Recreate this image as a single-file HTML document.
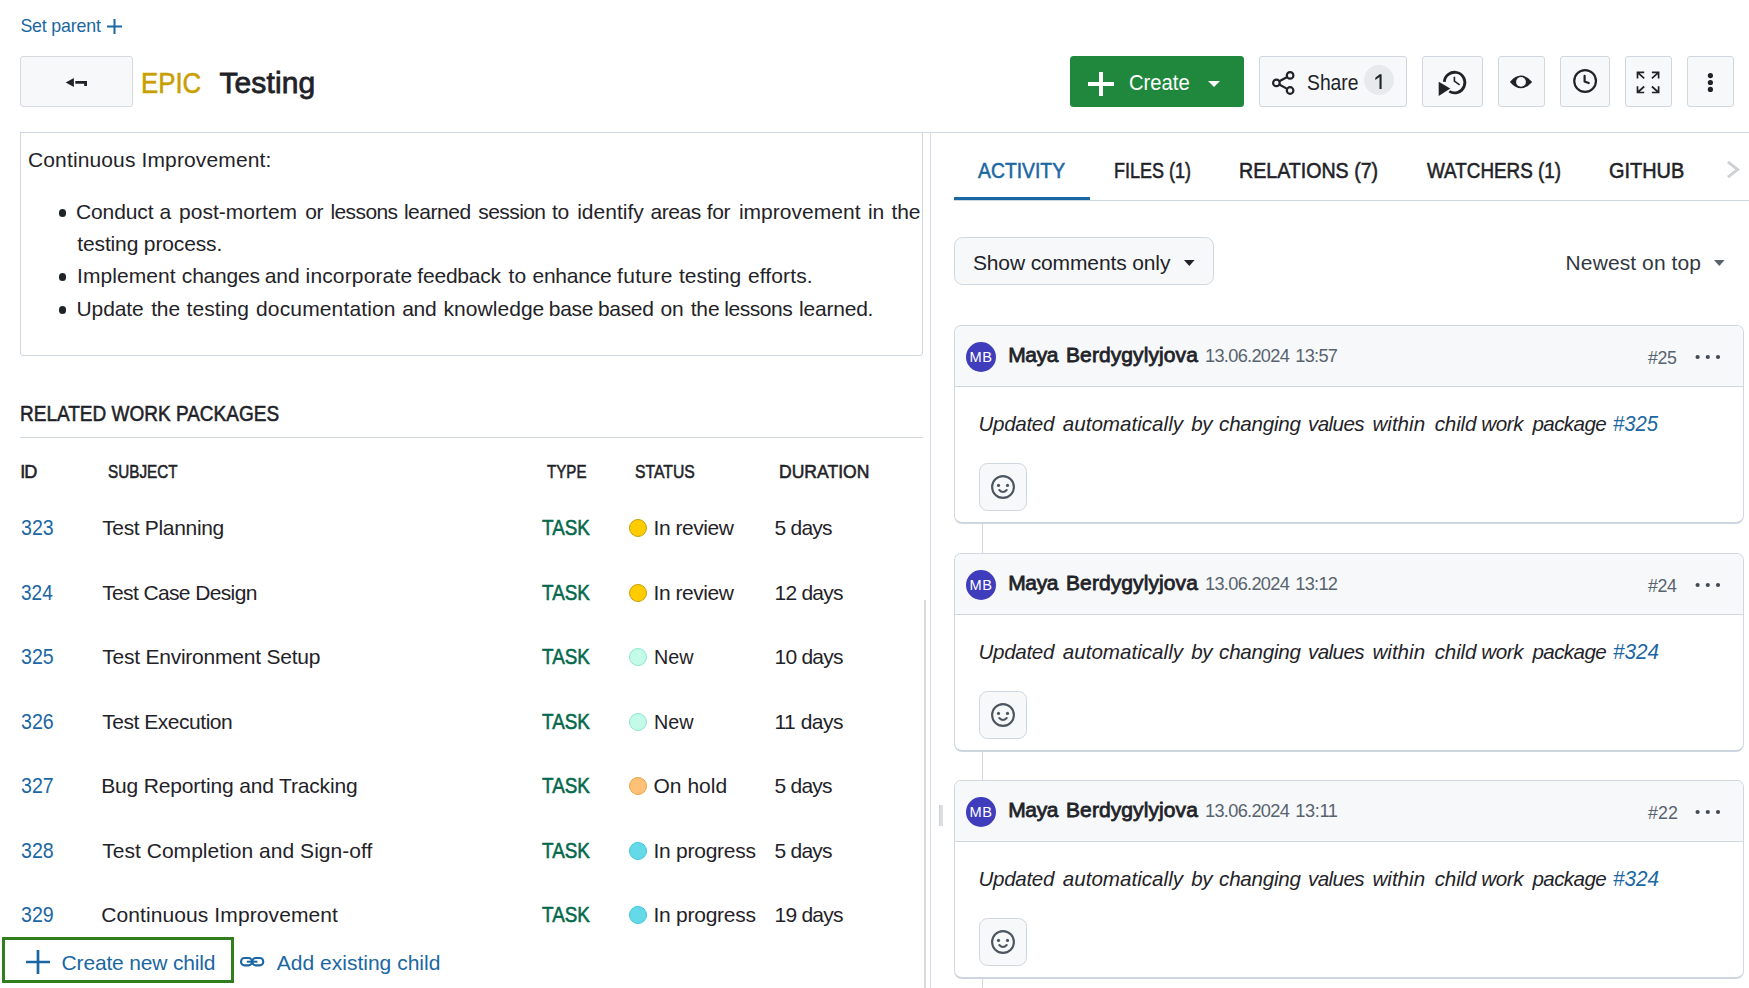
<!DOCTYPE html>
<html lang="en">
<head>
<meta charset="utf-8">
<title>EPIC Testing</title>
<style>
html,body{margin:0;padding:0;background:#fff}
body{width:1749px;height:988px;overflow:hidden;position:relative;font-family:"Liberation Sans",sans-serif;color:#1f2328}
.t{position:absolute;white-space:nowrap;line-height:1;display:block}
.a{position:absolute;box-sizing:border-box}
.btn{position:absolute;box-sizing:border-box;background:#f6f8fa;border:1px solid #d0d7de;border-radius:3px;top:56px;height:51px}
.ln{position:absolute;background:#d0d7de}
svg{position:absolute;overflow:visible}
.dot{position:absolute;box-sizing:border-box;width:18px;height:18px;border-radius:50%;left:629px;border:1px solid}
.card{position:absolute;box-sizing:border-box;left:954px;width:790px;height:199px;border:1px solid #d0d7de;border-bottom:2px solid #cdd5de;border-radius:7px 7px 8px 8px;background:#fff;overflow:hidden}
.card .hd{position:absolute;left:0;top:0;right:0;height:60px;background:#f6f8fa;border-bottom:1px solid #d0d7de}
.av{position:absolute;width:30px;height:30px;border-radius:50%;background:#3f3dbb;left:966px}
.emo{position:absolute;box-sizing:border-box;left:979px;width:48px;height:48px;border:1px solid #d0d7de;border-radius:8.5px;background:#f6f8fa}
.bul{position:absolute;width:7.4px;height:7.4px;border-radius:50%;background:#1f2328;left:58.7px}
</style>
</head>
<body>

<!-- ===== top header ===== -->
<svg style="left:106.5px;top:19px" width="15" height="15" viewBox="0 0 15 15"><path d="M7.5 0v15M0 7.5h15" stroke="#1a67a3" stroke-width="2" fill="none"/></svg>

<div class="btn" style="left:20px;width:113px;border-color:#d6d9dd"></div>
<svg style="left:65px;top:77px" width="23" height="11" viewBox="65 77 23 11"><path d="M65.7 82.4L73.9 77.9V86.9Z" fill="#1f2328"/><path d="M75.3 81H87V86H84.2V83.7H75.3Z" fill="#1f2328"/></svg>

<div class="a" style="left:1070px;top:56px;width:174px;height:51px;background:#1f883d;border-radius:3.5px"></div>
<svg style="left:1088px;top:72px" width="26" height="24" viewBox="0 0 26 24"><path d="M13 0v24M0 12h26" stroke="#fff" stroke-width="4" fill="none"/></svg>
<svg style="left:1207.6px;top:81px" width="12" height="6" viewBox="0 0 12 6"><path d="M0 0h12L6 6z" fill="#fff"/></svg>

<div class="btn" style="left:1259px;width:148px"></div>
<svg style="left:1270px;top:69px" width="28" height="28" viewBox="1270 69 28 28"><g fill="none" stroke="#1f2328" stroke-width="2.2"><circle cx="1276.4" cy="82.9" r="3.3"/><circle cx="1290.1" cy="75.4" r="3.3"/><circle cx="1290.1" cy="90.5" r="3.3"/><path d="M1279.3 81.3l7.9-4.3M1279.3 84.5l7.9 4.4"/></g></svg>
<div class="a" style="left:1363.9px;top:64.8px;width:29.9px;height:29.9px;border-radius:50%;background:#e7eaed"></div>
<svg style="left:1374px;top:73px" width="10" height="17" viewBox="1374 73 10 17"><path d="M1375.300 77.700L1379.700 74.300H1381.600V88.900H1379.500V76.900L1375.300 79.900Z" fill="#1f2328"/></svg>

<div class="btn" style="left:1422px;width:61px"></div>
<svg style="left:1436px;top:68px" width="34" height="30" viewBox="1436 68 34 30"><path d="M1444.3 81.9A10.3 10.3 0 1 1 1449.3 91.4" fill="none" stroke="#1f2328" stroke-width="2.8"/><path d="M1438.7 81.8V96L1450.3 88.5Z" fill="#1f2328"/><path d="M1454.4 76.8v4.3l5.2 3.8" fill="none" stroke="#1f2328" stroke-width="1.6"/></svg>

<div class="btn" style="left:1498px;width:47px"></div>
<svg style="left:1508px;top:74px" width="26" height="16" viewBox="1508 74 26 16"><path d="M1509.9 81.9Q1515.5 75.6 1521 75.6T1532.2 81.9Q1526.6 88.3 1521 88.3T1509.9 81.9Z" fill="#1f2328"/><circle cx="1521" cy="81.9" r="4.9" fill="#f6f8fa"/></svg>

<div class="btn" style="left:1560px;width:50px"></div>
<svg style="left:1572px;top:68px" width="27" height="27" viewBox="1572 68 27 27"><g fill="none" stroke="#1f2328" stroke-width="2.2" stroke-linecap="round" stroke-linejoin="round"><circle cx="1585.1" cy="81" r="10.85"/><path d="M1584.6 75.9v5.6l4.1 1.6"/></g></svg>

<div class="btn" style="left:1625px;width:47px"></div>
<svg style="left:1636px;top:71px" width="24" height="23" viewBox="1636 71 24 23"><g fill="none" stroke="#1f2328" stroke-width="1.7"><path d="M1644.2 72.3h-6.7v6.3M1637.5 72.3l6.7 6"/><path d="M1651.9 72.3h6.7v6.3M1658.6 72.3l-6.7 6"/><path d="M1644.2 92.5h-6.7v-6.3M1637.5 92.5l6.7-6"/><path d="M1651.9 92.5h6.7v-6.3M1658.6 92.5l-6.7-6"/></g></svg>

<div class="btn" style="left:1687px;width:47px"></div>
<svg style="left:1708px;top:72px" width="6" height="21" viewBox="1708 72 6 21"><g fill="#1f2328"><circle cx="1710.4" cy="75.6" r="2.6"/><circle cx="1710.4" cy="82.5" r="2.6"/><circle cx="1710.4" cy="89.4" r="2.6"/></g></svg>

<!-- ===== separator lines ===== -->
<div class="ln" style="left:20px;top:132px;width:1729px;height:1px"></div>
<div class="ln" style="left:930px;top:132px;width:1px;height:856px;background:#d5dce3"></div>
<div class="a" style="left:924px;top:600px;width:2px;height:388px;background:#dadada"></div>
<div class="a" style="left:939px;top:805px;width:4px;height:21px;background:#dddee0;border-left:1px solid #cfd1d4"></div>

<!-- ===== description box ===== -->
<div class="a" style="left:20px;top:132px;width:903px;height:224px;border:1px solid #d0d7de;border-radius:0 0 3px 3px"></div>
<div class="bul" style="top:209.2px"></div>
<div class="bul" style="top:273.2px"></div>
<div class="bul" style="top:306.2px"></div>

<!-- ===== related work packages ===== -->
<div class="ln" style="left:20px;top:437px;width:903px;height:1px"></div>
<div class="dot" style="top:519.00px;background:#ffcc00;border-color:#c7a008"></div>
<div class="dot" style="top:584.00px;background:#ffcc00;border-color:#c7a008"></div>
<div class="dot" style="top:648.00px;background:#c3fae8;border-color:#8ce9cd"></div>
<div class="dot" style="top:713.00px;background:#c3fae8;border-color:#8ce9cd"></div>
<div class="dot" style="top:777.00px;background:#ffc078;border-color:#e9a53c"></div>
<div class="dot" style="top:842.00px;background:#66d9e8;border-color:#3bc9db"></div>
<div class="dot" style="top:906.00px;background:#66d9e8;border-color:#3bc9db"></div>

<div class="a" style="left:2px;top:937px;width:232px;height:46px;border:3px solid #327e1e"></div>
<svg style="left:26px;top:950.2px" width="24" height="24" viewBox="0 0 24 24"><path d="M12 0v24M0 12h24" stroke="#1a67a3" stroke-width="2.7" fill="none"/></svg>
<svg style="left:239.8px;top:957.2px" width="24.3" height="9.4" viewBox="0 0 24.3 9.4"><g fill="none" stroke="#1a67a3" stroke-width="2.1"><rect x="1.05" y="1.05" width="10.9" height="7.3" rx="3.4"/><rect x="12.35" y="1.05" width="10.9" height="7.3" rx="3.4"/><path d="M6.900 4.700H17.400" stroke-width="2"/></g></svg>

<!-- ===== right pane ===== -->
<div class="ln" style="left:954px;top:200px;width:795px;height:1px"></div>
<div class="a" style="left:954px;top:197px;width:136px;height:3px;background:#1a67a3"></div>
<svg style="left:1726px;top:160px" width="14" height="19" viewBox="0 0 14 19"><path d="M1.900 1.900L11.600 9.600L1.900 17.100" fill="none" stroke="#cdd0d4" stroke-width="2.900"/></svg>

<div class="a" style="left:954px;top:237px;width:260px;height:48px;background:#f6f8fa;border:1px solid #d0d7de;border-radius:8.6px"></div>
<svg style="left:1183.8px;top:259.6px" width="10.6" height="6" viewBox="0 0 10.6 6"><path d="M0 0h10.600L5.300 6z" fill="#1f2328"/></svg>
<svg style="left:1714px;top:259.6px" width="10.6" height="6" viewBox="0 0 10.6 6"><path d="M0 0h10.600L5.300 6z" fill="#59636e"/></svg>

<div class="card" style="top:325px"><div class="hd"></div></div>
<div class="av" style="top:342px"></div>
<div class="emo" style="top:463px"></div>
<svg style="left:989.90px;top:474.00px" width="26" height="26" viewBox="-13 -13 26 26"><g fill="none" stroke="#4d5660" stroke-width="2.1" stroke-linecap="round"><circle cx="0" cy="0" r="10.9"/><path d="M-3.700 3.100Q0 6.900 3.700 3.100"/></g><circle cx="-4.500" cy="-1.600" r="1.600" fill="#4d5660"/><circle cx="4.500" cy="-1.600" r="1.600" fill="#4d5660"/></svg>
<svg style="left:1694px;top:353.20px" width="28" height="8" viewBox="1694 -4 28 8"><g fill="#424a53"><circle cx="1697.600" cy="0" r="2.100"/><circle cx="1707.800" cy="0" r="2.100"/><circle cx="1718" cy="0" r="2.100"/></g></svg>
<div class="ln" style="left:982px;top:524px;width:1px;height:29px"></div>
<div class="card" style="top:553px"><div class="hd"></div></div>
<div class="av" style="top:570px"></div>
<div class="emo" style="top:691px"></div>
<svg style="left:989.90px;top:702.00px" width="26" height="26" viewBox="-13 -13 26 26"><g fill="none" stroke="#4d5660" stroke-width="2.1" stroke-linecap="round"><circle cx="0" cy="0" r="10.9"/><path d="M-3.700 3.100Q0 6.900 3.700 3.100"/></g><circle cx="-4.500" cy="-1.600" r="1.600" fill="#4d5660"/><circle cx="4.500" cy="-1.600" r="1.600" fill="#4d5660"/></svg>
<svg style="left:1694px;top:581.20px" width="28" height="8" viewBox="1694 -4 28 8"><g fill="#424a53"><circle cx="1697.600" cy="0" r="2.100"/><circle cx="1707.800" cy="0" r="2.100"/><circle cx="1718" cy="0" r="2.100"/></g></svg>
<div class="ln" style="left:982px;top:752px;width:1px;height:28px"></div>
<div class="card" style="top:780px"><div class="hd"></div></div>
<div class="av" style="top:797px"></div>
<div class="emo" style="top:918px"></div>
<svg style="left:989.90px;top:929.00px" width="26" height="26" viewBox="-13 -13 26 26"><g fill="none" stroke="#4d5660" stroke-width="2.1" stroke-linecap="round"><circle cx="0" cy="0" r="10.9"/><path d="M-3.700 3.100Q0 6.900 3.700 3.100"/></g><circle cx="-4.500" cy="-1.600" r="1.600" fill="#4d5660"/><circle cx="4.500" cy="-1.600" r="1.600" fill="#4d5660"/></svg>
<svg style="left:1694px;top:808.20px" width="28" height="8" viewBox="1694 -4 28 8"><g fill="#424a53"><circle cx="1697.600" cy="0" r="2.100"/><circle cx="1707.800" cy="0" r="2.100"/><circle cx="1718" cy="0" r="2.100"/></g></svg>
<div class="ln" style="left:982px;top:979px;width:1px;height:9px"></div>

<!-- ===== text ===== -->
<span class="t" style="left:20.40px;top:18px;font-size:17.8px;color:#1a67a3;letter-spacing:-0.167px">Set parent</span>
<span class="t" style="left:140.52px;top:68px;font-size:30px;color:#c79f00;transform:scaleX(0.8600);transform-origin:0 0;-webkit-text-stroke:0.55px #c79f00">EPIC</span>
<span class="t" style="left:219.40px;top:68px;font-size:30px;color:#1f2328;letter-spacing:0.138px;-webkit-text-stroke:0.8px #1f2328">Testing</span>
<span class="t" style="left:1128.85px;top:72px;font-size:21.2px;color:#ffffff;transform:scaleX(0.9545);transform-origin:0 0">Create</span>
<span class="t" style="left:1306.70px;top:72px;font-size:21.2px;color:#1f2328;transform:scaleX(0.9111);transform-origin:0 0">Share</span>
<span class="t" style="left:28.00px;top:149px;font-size:21px;color:#1f2328;letter-spacing:0.131px">Continuous Improvement:</span>
<span class="t" style="left:76.00px;top:201px;font-size:21px;color:#1f2328;letter-spacing:-0.114px">Conduct</span>
<span class="t" style="left:159.45px;top:201px;font-size:21px;color:#1f2328">a</span>
<span class="t" style="left:179.02px;top:201px;font-size:21px;color:#1f2328;letter-spacing:0.020px">post-mortem</span>
<span class="t" style="left:305.28px;top:201px;font-size:21px;color:#1f2328;letter-spacing:-0.430px">or</span>
<span class="t" style="left:330.39px;top:201px;font-size:21px;color:#1f2328;letter-spacing:-0.580px">lessons</span>
<span class="t" style="left:403.90px;top:201px;font-size:21px;color:#1f2328;letter-spacing:-0.446px">learned</span>
<span class="t" style="left:478.33px;top:201px;font-size:21px;color:#1f2328;letter-spacing:-0.580px">session</span>
<span class="t" style="left:551.90px;top:201px;font-size:21px;color:#1f2328;letter-spacing:-0.130px">to</span>
<span class="t" style="left:577.16px;top:201px;font-size:21px;color:#1f2328;letter-spacing:0.020px">identify</span>
<span class="t" style="left:650.54px;top:201px;font-size:21px;color:#1f2328;letter-spacing:-0.430px">areas</span>
<span class="t" style="left:706.80px;top:201px;font-size:21px;color:#1f2328;letter-spacing:-0.407px">for</span>
<span class="t" style="left:738.93px;top:201px;font-size:21px;color:#1f2328;letter-spacing:0.020px">improvement</span>
<span class="t" style="left:868.03px;top:201px;font-size:21px;color:#1f2328;letter-spacing:-0.130px">in</span>
<span class="t" style="left:891.57px;top:201px;font-size:21px;color:#1f2328;letter-spacing:-0.130px">the</span>
<span class="t" style="left:77.30px;top:233px;font-size:21px;color:#1f2328;letter-spacing:-0.142px">testing process.</span>
<span class="t" style="left:77.00px;top:265px;font-size:21px;color:#1f2328;letter-spacing:0.075px">Implement</span>
<span class="t" style="left:181.86px;top:265px;font-size:21px;color:#1f2328;letter-spacing:-0.220px">changes</span>
<span class="t" style="left:264.74px;top:265px;font-size:21px;color:#1f2328;letter-spacing:-0.070px">and</span>
<span class="t" style="left:305.60px;top:265px;font-size:21px;color:#1f2328;letter-spacing:0.142px">incorporate</span>
<span class="t" style="left:417.36px;top:265px;font-size:21px;color:#1f2328;letter-spacing:-0.220px">feedback</span>
<span class="t" style="left:508.42px;top:265px;font-size:21px;color:#1f2328;letter-spacing:0.230px">to</span>
<span class="t" style="left:532.46px;top:265px;font-size:21px;color:#1f2328;letter-spacing:-0.220px">enhance</span>
<span class="t" style="left:617.00px;top:265px;font-size:21px;color:#1f2328;letter-spacing:0.336px">future</span>
<span class="t" style="left:678.90px;top:265px;font-size:21px;color:#1f2328;letter-spacing:0.085px">testing</span>
<span class="t" style="left:748.00px;top:265px;font-size:21px;color:#1f2328;letter-spacing:0.118px">efforts.</span>
<span class="t" style="left:76.50px;top:298px;font-size:21px;color:#1f2328;letter-spacing:-0.108px">Update</span>
<span class="t" style="left:151.20px;top:298px;font-size:21px;color:#1f2328;letter-spacing:-0.157px">the</span>
<span class="t" style="left:186.60px;top:298px;font-size:21px;color:#1f2328;letter-spacing:0.068px">testing</span>
<span class="t" style="left:256.05px;top:298px;font-size:21px;color:#1f2328;letter-spacing:0.142px">documentation</span>
<span class="t" style="left:402.18px;top:298px;font-size:21px;color:#1f2328;letter-spacing:-0.308px">and</span>
<span class="t" style="left:443.50px;top:298px;font-size:21px;color:#1f2328;letter-spacing:0.047px">knowledge</span>
<span class="t" style="left:548.83px;top:298px;font-size:21px;color:#1f2328;letter-spacing:-0.308px">base</span>
<span class="t" style="left:597.90px;top:298px;font-size:21px;color:#1f2328;letter-spacing:-0.308px">based</span>
<span class="t" style="left:660.50px;top:298px;font-size:21px;color:#1f2328;letter-spacing:-0.279px">on</span>
<span class="t" style="left:690.70px;top:298px;font-size:21px;color:#1f2328;letter-spacing:-0.157px">the</span>
<span class="t" style="left:724.37px;top:298px;font-size:21px;color:#1f2328;letter-spacing:-0.458px">lessons</span>
<span class="t" style="left:799.00px;top:298px;font-size:21px;color:#1f2328;letter-spacing:-0.208px">learned.</span>
<span class="t" style="left:20.35px;top:404px;font-size:21.3px;color:#1f2328;transform:scaleX(0.8924);transform-origin:0 0;-webkit-text-stroke:0.55px #1f2328">RELATED WORK PACKAGES</span>
<span class="t" style="left:20.27px;top:463px;font-size:18.2px;color:#1f2328;letter-spacing:-1.003px;-webkit-text-stroke:0.55px #1f2328">ID</span>
<span class="t" style="left:107.73px;top:463px;font-size:18.2px;color:#1f2328;transform:scaleX(0.8391);transform-origin:0 0;-webkit-text-stroke:0.55px #1f2328">SUBJECT</span>
<span class="t" style="left:547.43px;top:463px;font-size:18.2px;color:#1f2328;transform:scaleX(0.8305);transform-origin:0 0;-webkit-text-stroke:0.55px #1f2328">TYPE</span>
<span class="t" style="left:634.84px;top:463px;font-size:18.2px;color:#1f2328;transform:scaleX(0.8652);transform-origin:0 0;-webkit-text-stroke:0.55px #1f2328">STATUS</span>
<span class="t" style="left:778.50px;top:463px;font-size:18.2px;color:#1f2328;transform:scaleX(0.9648);transform-origin:0 0;-webkit-text-stroke:0.55px #1f2328">DURATION</span>
<span class="t" style="left:21.00px;top:518px;font-size:21.3px;color:#1a67a3;transform:scaleX(0.9196);transform-origin:0 0">323</span>
<span class="t" style="left:102.20px;top:517px;font-size:21px;color:#1f2328;letter-spacing:-0.334px">Test Planning</span>
<span class="t" style="left:542.14px;top:518px;font-size:21.3px;color:#04694c;transform:scaleX(0.8862);transform-origin:0 0;-webkit-text-stroke:0.55px #04694c">TASK</span>
<span class="t" style="left:653.50px;top:517px;font-size:21px;color:#1f2328;letter-spacing:-0.458px">In review</span>
<span class="t" style="left:774.50px;top:517px;font-size:21px;color:#1f2328;letter-spacing:-0.754px">5 days</span>
<span class="t" style="left:21.00px;top:583px;font-size:21.3px;color:#1a67a3;transform:scaleX(0.8938);transform-origin:0 0">324</span>
<span class="t" style="left:102.20px;top:582px;font-size:21px;color:#1f2328;letter-spacing:-0.626px">Test Case Design</span>
<span class="t" style="left:542.14px;top:583px;font-size:21.3px;color:#04694c;transform:scaleX(0.8862);transform-origin:0 0;-webkit-text-stroke:0.55px #04694c">TASK</span>
<span class="t" style="left:653.50px;top:582px;font-size:21px;color:#1f2328;letter-spacing:-0.458px">In review</span>
<span class="t" style="left:774.50px;top:582px;font-size:21px;color:#1f2328;letter-spacing:-0.759px">12 days</span>
<span class="t" style="left:21.00px;top:647px;font-size:21.3px;color:#1a67a3;transform:scaleX(0.9196);transform-origin:0 0">325</span>
<span class="t" style="left:102.20px;top:646px;font-size:21px;color:#1f2328;letter-spacing:-0.227px">Test Environment Setup</span>
<span class="t" style="left:542.14px;top:647px;font-size:21.3px;color:#04694c;transform:scaleX(0.8862);transform-origin:0 0;-webkit-text-stroke:0.55px #04694c">TASK</span>
<span class="t" style="left:653.56px;top:646px;font-size:21px;color:#1f2328;transform:scaleX(0.9416);transform-origin:0 0">New</span>
<span class="t" style="left:774.50px;top:646px;font-size:21px;color:#1f2328;letter-spacing:-0.759px">10 days</span>
<span class="t" style="left:21.00px;top:712px;font-size:21.3px;color:#1a67a3;transform:scaleX(0.9196);transform-origin:0 0">326</span>
<span class="t" style="left:102.20px;top:711px;font-size:21px;color:#1f2328;letter-spacing:-0.461px">Test Execution</span>
<span class="t" style="left:542.14px;top:712px;font-size:21.3px;color:#04694c;transform:scaleX(0.8862);transform-origin:0 0;-webkit-text-stroke:0.55px #04694c">TASK</span>
<span class="t" style="left:653.56px;top:711px;font-size:21px;color:#1f2328;transform:scaleX(0.9416);transform-origin:0 0">New</span>
<span class="t" style="left:774.50px;top:711px;font-size:21px;color:#1f2328;letter-spacing:-0.499px">11 days</span>
<span class="t" style="left:21.00px;top:776px;font-size:21.3px;color:#1a67a3;transform:scaleX(0.9196);transform-origin:0 0">327</span>
<span class="t" style="left:101.20px;top:775px;font-size:21px;color:#1f2328;letter-spacing:-0.153px">Bug Reporting and Tracking</span>
<span class="t" style="left:542.14px;top:776px;font-size:21.3px;color:#04694c;transform:scaleX(0.8862);transform-origin:0 0;-webkit-text-stroke:0.55px #04694c">TASK</span>
<span class="t" style="left:653.50px;top:775px;font-size:21px;color:#1f2328;letter-spacing:0.021px">On hold</span>
<span class="t" style="left:774.50px;top:775px;font-size:21px;color:#1f2328;letter-spacing:-0.754px">5 days</span>
<span class="t" style="left:21.00px;top:841px;font-size:21.3px;color:#1a67a3;transform:scaleX(0.9196);transform-origin:0 0">328</span>
<span class="t" style="left:102.20px;top:840px;font-size:21px;color:#1f2328;letter-spacing:0.032px">Test Completion and Sign-off</span>
<span class="t" style="left:542.14px;top:841px;font-size:21.3px;color:#04694c;transform:scaleX(0.8862);transform-origin:0 0;-webkit-text-stroke:0.55px #04694c">TASK</span>
<span class="t" style="left:653.50px;top:840px;font-size:21px;color:#1f2328;letter-spacing:-0.255px">In progress</span>
<span class="t" style="left:774.50px;top:840px;font-size:21px;color:#1f2328;letter-spacing:-0.754px">5 days</span>
<span class="t" style="left:21.00px;top:905px;font-size:21.3px;color:#1a67a3;transform:scaleX(0.9196);transform-origin:0 0">329</span>
<span class="t" style="left:101.20px;top:904px;font-size:21px;color:#1f2328;letter-spacing:0.101px">Continuous Improvement</span>
<span class="t" style="left:542.14px;top:905px;font-size:21.3px;color:#04694c;transform:scaleX(0.8862);transform-origin:0 0;-webkit-text-stroke:0.55px #04694c">TASK</span>
<span class="t" style="left:653.50px;top:904px;font-size:21px;color:#1f2328;letter-spacing:-0.255px">In progress</span>
<span class="t" style="left:774.50px;top:904px;font-size:21px;color:#1f2328;letter-spacing:-0.759px">19 days</span>
<span class="t" style="left:61.60px;top:952px;font-size:21px;color:#1a67a3;letter-spacing:-0.176px">Create new child</span>
<span class="t" style="left:276.80px;top:952px;font-size:21px;color:#1a67a3;letter-spacing:0.009px">Add existing child</span>
<span class="t" style="left:978.25px;top:161px;font-size:21.3px;color:#1a67a3;transform:scaleX(0.9086);transform-origin:0 0;-webkit-text-stroke:0.55px #1a67a3">ACTIVITY</span>
<span class="t" style="left:1113.99px;top:161px;font-size:21.3px;color:#1f2328;transform:scaleX(0.8450);transform-origin:0 0;-webkit-text-stroke:0.55px #1f2328">FILES (1)</span>
<span class="t" style="left:1239.33px;top:161px;font-size:21.3px;color:#1f2328;transform:scaleX(0.9209);transform-origin:0 0;-webkit-text-stroke:0.55px #1f2328">RELATIONS (7)</span>
<span class="t" style="left:1427.14px;top:161px;font-size:21.3px;color:#1f2328;transform:scaleX(0.8854);transform-origin:0 0;-webkit-text-stroke:0.55px #1f2328">WATCHERS (1)</span>
<span class="t" style="left:1609.02px;top:161px;font-size:21.3px;color:#1f2328;transform:scaleX(0.9348);transform-origin:0 0;-webkit-text-stroke:0.55px #1f2328">GITHUB</span>
<span class="t" style="left:972.90px;top:252px;font-size:21px;color:#1f2328;letter-spacing:-0.122px">Show comments only</span>
<span class="t" style="left:1565.60px;top:252px;font-size:21px;color:#32383f;letter-spacing:0.095px">Newest on top</span>
<span class="t" style="left:1008.13px;top:344px;font-size:21px;color:#1f2328;letter-spacing:-0.314px;-webkit-text-stroke:0.8px #1f2328">Maya</span>
<span class="t" style="left:1066.00px;top:344px;font-size:21px;color:#1f2328;letter-spacing:0.096px;-webkit-text-stroke:0.8px #1f2328">Berdygylyjova</span>
<span class="t" style="left:1205.00px;top:347px;font-size:18.2px;color:#59636e;letter-spacing:-0.690px">13.06.2024</span>
<span class="t" style="left:1295.30px;top:347px;font-size:18.2px;color:#59636e;letter-spacing:-0.725px">13:57</span>
<span class="t" style="left:1648.00px;top:350px;font-size:17.8px;color:#59636e;letter-spacing:-0.389px">#25</span>
<span class="t" style="left:978.50px;top:414px;font-size:20.6px;color:#1f2328;letter-spacing:-0.334px;font-style:italic">Updated</span>
<span class="t" style="left:1062.75px;top:414px;font-size:20.6px;color:#1f2328;letter-spacing:0.009px;font-style:italic">automatically</span>
<span class="t" style="left:1191.14px;top:414px;font-size:20.6px;color:#1f2328;letter-spacing:-0.441px;font-style:italic">by</span>
<span class="t" style="left:1219.10px;top:414px;font-size:20.6px;color:#1f2328;letter-spacing:-0.248px;font-style:italic">changing</span>
<span class="t" style="left:1308.06px;top:414px;font-size:20.6px;color:#1f2328;letter-spacing:-0.591px;font-style:italic">values</span>
<span class="t" style="left:1372.43px;top:414px;font-size:20.6px;color:#1f2328;letter-spacing:0.009px;font-style:italic">within</span>
<span class="t" style="left:1434.73px;top:414px;font-size:20.6px;color:#1f2328;letter-spacing:-0.141px;font-style:italic">child</span>
<span class="t" style="left:1481.27px;top:414px;font-size:20.6px;color:#1f2328;letter-spacing:-0.441px;font-style:italic">work</span>
<span class="t" style="left:1532.42px;top:414px;font-size:20.6px;color:#1f2328;letter-spacing:-0.591px;font-style:italic">package</span>
<span class="t" style="left:1613.30px;top:413px;font-size:21.2px;color:#1a67a3;font-style:italic;transform:scaleX(0.9567);transform-origin:0 0">#325</span>
<span class="t" style="left:969.60px;top:350px;font-size:14.6px;color:#ffffff;letter-spacing:0.543px">MB</span>
<span class="t" style="left:1008.13px;top:572px;font-size:21px;color:#1f2328;letter-spacing:-0.314px;-webkit-text-stroke:0.8px #1f2328">Maya</span>
<span class="t" style="left:1066.00px;top:572px;font-size:21px;color:#1f2328;letter-spacing:0.096px;-webkit-text-stroke:0.8px #1f2328">Berdygylyjova</span>
<span class="t" style="left:1205.00px;top:575px;font-size:18.2px;color:#59636e;letter-spacing:-0.690px">13.06.2024</span>
<span class="t" style="left:1295.30px;top:575px;font-size:18.2px;color:#59636e;letter-spacing:-0.725px">13:12</span>
<span class="t" style="left:1648.00px;top:578px;font-size:17.8px;color:#59636e;letter-spacing:-0.389px">#24</span>
<span class="t" style="left:978.50px;top:642px;font-size:20.6px;color:#1f2328;letter-spacing:-0.334px;font-style:italic">Updated</span>
<span class="t" style="left:1062.75px;top:642px;font-size:20.6px;color:#1f2328;letter-spacing:0.009px;font-style:italic">automatically</span>
<span class="t" style="left:1191.14px;top:642px;font-size:20.6px;color:#1f2328;letter-spacing:-0.441px;font-style:italic">by</span>
<span class="t" style="left:1219.10px;top:642px;font-size:20.6px;color:#1f2328;letter-spacing:-0.248px;font-style:italic">changing</span>
<span class="t" style="left:1308.06px;top:642px;font-size:20.6px;color:#1f2328;letter-spacing:-0.591px;font-style:italic">values</span>
<span class="t" style="left:1372.43px;top:642px;font-size:20.6px;color:#1f2328;letter-spacing:0.009px;font-style:italic">within</span>
<span class="t" style="left:1434.73px;top:642px;font-size:20.6px;color:#1f2328;letter-spacing:-0.141px;font-style:italic">child</span>
<span class="t" style="left:1481.27px;top:642px;font-size:20.6px;color:#1f2328;letter-spacing:-0.441px;font-style:italic">work</span>
<span class="t" style="left:1532.42px;top:642px;font-size:20.6px;color:#1f2328;letter-spacing:-0.591px;font-style:italic">package</span>
<span class="t" style="left:1613.30px;top:641px;font-size:21.2px;color:#1a67a3;font-style:italic;transform:scaleX(0.9773);transform-origin:0 0">#324</span>
<span class="t" style="left:969.60px;top:578px;font-size:14.6px;color:#ffffff;letter-spacing:0.543px">MB</span>
<span class="t" style="left:1008.13px;top:799px;font-size:21px;color:#1f2328;letter-spacing:-0.314px;-webkit-text-stroke:0.8px #1f2328">Maya</span>
<span class="t" style="left:1066.00px;top:799px;font-size:21px;color:#1f2328;letter-spacing:0.096px;-webkit-text-stroke:0.8px #1f2328">Berdygylyjova</span>
<span class="t" style="left:1205.00px;top:802px;font-size:18.2px;color:#59636e;letter-spacing:-0.690px">13.06.2024</span>
<span class="t" style="left:1295.30px;top:802px;font-size:18.2px;color:#59636e;letter-spacing:-0.388px">13:11</span>
<span class="t" style="left:1648.00px;top:805px;font-size:17.8px;color:#59636e;letter-spacing:0.111px">#22</span>
<span class="t" style="left:978.50px;top:869px;font-size:20.6px;color:#1f2328;letter-spacing:-0.334px;font-style:italic">Updated</span>
<span class="t" style="left:1062.75px;top:869px;font-size:20.6px;color:#1f2328;letter-spacing:0.009px;font-style:italic">automatically</span>
<span class="t" style="left:1191.14px;top:869px;font-size:20.6px;color:#1f2328;letter-spacing:-0.441px;font-style:italic">by</span>
<span class="t" style="left:1219.10px;top:869px;font-size:20.6px;color:#1f2328;letter-spacing:-0.248px;font-style:italic">changing</span>
<span class="t" style="left:1308.06px;top:869px;font-size:20.6px;color:#1f2328;letter-spacing:-0.591px;font-style:italic">values</span>
<span class="t" style="left:1372.43px;top:869px;font-size:20.6px;color:#1f2328;letter-spacing:0.009px;font-style:italic">within</span>
<span class="t" style="left:1434.73px;top:869px;font-size:20.6px;color:#1f2328;letter-spacing:-0.141px;font-style:italic">child</span>
<span class="t" style="left:1481.27px;top:869px;font-size:20.6px;color:#1f2328;letter-spacing:-0.441px;font-style:italic">work</span>
<span class="t" style="left:1532.42px;top:869px;font-size:20.6px;color:#1f2328;letter-spacing:-0.591px;font-style:italic">package</span>
<span class="t" style="left:1613.30px;top:868px;font-size:21.2px;color:#1a67a3;font-style:italic;transform:scaleX(0.9773);transform-origin:0 0">#324</span>
<span class="t" style="left:969.60px;top:805px;font-size:14.6px;color:#ffffff;letter-spacing:0.543px">MB</span>
</body>
</html>
